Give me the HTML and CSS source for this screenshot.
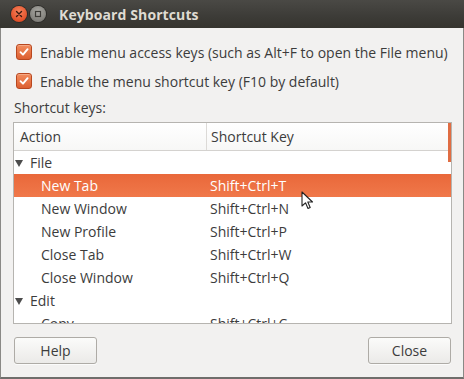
FILE: index.html
```html
<!DOCTYPE html>
<html>
<head>
<meta charset="utf-8">
<link rel="stylesheet" href="styles.css">
</head>
<body>
<div class="window">
  <div class="titlebar">
    <span class="wbtn close-btn"><svg width="8" height="8" viewBox="0 0 8 8"><path d="M1.5 1.5 L6.5 6.5 M6.5 1.5 L1.5 6.5" stroke="#3a1a10" stroke-width="1.4" stroke-linecap="round"/></svg></span>
    <span class="wbtn min-btn"><svg width="8" height="8" viewBox="0 0 8 8"><rect x="1.5" y="1.5" width="5" height="5" fill="none" stroke="#3c3b37" stroke-width="1.2"/></svg></span>
    <span class="title">Keyboard Shortcuts</span>
  </div>
  <div class="content">
    <label class="check-row"><span class="check"><svg width="12" height="12" viewBox="0 0 12 12"><path d="M2.5 6.2 L5 8.7 L9.6 3.2" fill="none" stroke="#fff" stroke-width="1.9" stroke-linecap="round" stroke-linejoin="round"/></svg></span>Enable menu access keys (such as Alt+F to open the File menu)</label>
    <label class="check-row"><span class="check"><svg width="12" height="12" viewBox="0 0 12 12"><path d="M2.5 6.2 L5 8.7 L9.6 3.2" fill="none" stroke="#fff" stroke-width="1.9" stroke-linecap="round" stroke-linejoin="round"/></svg></span>Enable the menu shortcut key (F10 by default)</label>
    <div class="section-label">Shortcut keys:</div>
    <div class="tree">
      <div class="tree-head">
        <div class="col-a">Action</div>
        <div class="col-b">Shortcut Key</div>
      </div>
      <div class="row group"><div class="col-a"><span class="tri"></span>File</div><div class="col-b"></div></div>
      <div class="row selected"><div class="col-a indent">New Tab</div><div class="col-b">Shift+Ctrl+T</div></div>
      <div class="row"><div class="col-a indent">New Window</div><div class="col-b">Shift+Ctrl+N</div></div>
      <div class="row"><div class="col-a indent">New Profile</div><div class="col-b">Shift+Ctrl+P</div></div>
      <div class="row"><div class="col-a indent">Close Tab</div><div class="col-b">Shift+Ctrl+W</div></div>
      <div class="row"><div class="col-a indent">Close Window</div><div class="col-b">Shift+Ctrl+Q</div></div>
      <div class="row group"><div class="col-a"><span class="tri"></span>Edit</div><div class="col-b"></div></div>
      <div class="row"><div class="col-a indent">Copy</div><div class="col-b">Shift+Ctrl+C</div></div>
      <div class="scrollbar"></div>
      <svg class="cursor" width="14" height="20" viewBox="0 0 14 20"><path d="M1 1 L1 15 L4.5 11.8 L7 17.5 L9.2 16.5 L6.8 11 L11.5 11 Z" fill="#fff" stroke="#222" stroke-width="1.1" stroke-linejoin="round"/></svg>
    </div>
    <div class="buttons">
      <button class="btn">Help</button>
      <button class="btn">Close</button>
    </div>
  </div>
</div>
</body>
</html>
```
FILE: styles.css
```css
html, body {
  margin: 0;
  padding: 0;
  background: #f2f1f0;
}
body {
  font-family: "Open Sans", "DejaVu Sans", sans-serif;
  font-size: 14px;
  color: #3c3c3c;
}
.window {
  width: 464px;
  height: 379px;
  box-sizing: border-box;
  background: #f2f1f0;
  border-left: 1px solid #8a8986;
  border-right: 1px solid #8a8986;
  border-bottom: 2px solid #6f6e6b;
  display: flex;
  flex-direction: column;
}
.titlebar {
  height: 28px;
  flex: none;
  margin: 0 -1px;
  background: linear-gradient(#4a4945, #3c3b37 60%, #36352f);
  display: flex;
  align-items: center;
  padding-left: 11px;
}
.wbtn {
  width: 16px;
  height: 16px;
  border-radius: 50%;
  display: flex;
  align-items: center;
  justify-content: center;
  margin-right: 2px;
}
.close-btn {
  background: radial-gradient(circle at 50% 35%, #f7835c, #e2512a 70%, #b83c1c);
  box-shadow: 0 0 0 1px #2c2b28;
}
.min-btn {
  background: radial-gradient(circle at 50% 35%, #aaa9a4, #7e7d78 75%);
  box-shadow: 0 0 0 1px #2c2b28;
  margin-left: 1px;
}
.title {
  color: #dfdbd2;
  font-weight: bold;
  font-size: 14px;
  margin-left: 11px;
  letter-spacing: 0.1px;
}
.content {
  flex: 1;
  display: flex;
  flex-direction: column;
  padding: 13px 11px 0 12px;
}
.check-row {
  display: flex;
  align-items: center;
  height: 22px;
  margin-bottom: 7px;
  white-space: nowrap;
}
.check {
  width: 14px;
  height: 14px;
  flex: none;
  margin: 0 8px 0 3px;
  border: 1px solid #b8471f;
  border-radius: 3px;
  background: linear-gradient(#f38d5e, #dc5f31);
  display: flex;
  align-items: center;
  justify-content: center;
  box-shadow: inset 0 1px 0 rgba(255,255,255,0.25);
}
.section-label {
  height: 20px;
  line-height: 20px;
  margin-top: -1px;
  margin-bottom: 4px;
  padding-left: 1px;
}
.tree {
  position: relative;
  height: 202px;
  box-sizing: border-box;
  border: 1px solid #b6b4b0;
  background: #fff;
  overflow: hidden;
  flex: none;
}
.tree-head {
  display: flex;
  height: 28px;
  box-sizing: border-box;
  border-bottom: 1px solid #d4d2cf;
  background: linear-gradient(#ffffff, #f7f7f6);
  align-items: center;
}
.tree-head .col-a {
  width: 186px;
  padding-left: 6px;
  border-right: 1px solid #dcdad7;
  height: 100%;
  display: flex;
  align-items: center;
}
.tree-head .col-b {
  padding-left: 4px;
}
.row {
  display: flex;
  height: 23px;
  align-items: center;
  white-space: nowrap;
}
.row .col-a {
  width: 194px;
  display: flex;
  align-items: center;
  padding-left: 1px;
}
.row .col-a.indent {
  padding-left: 27px;
  width: 168px;
}
.row .col-b {
  padding-left: 1px;
}
.row.selected {
  background: linear-gradient(#e9683a, #f0784a);
  color: #ffffff;
}
.tri {
  width: 0;
  height: 0;
  border-left: 4px solid transparent;
  border-right: 4px solid transparent;
  border-top: 7px solid #4c4c4c;
  margin: 1px 7px 0 0;
}
.scrollbar {
  position: absolute;
  right: 0;
  top: 0;
  width: 3px;
  height: 39px;
  background: #e06d43;
}
.cursor {
  position: absolute;
  left: 287px;
  top: 68px;
}
.buttons {
  display: flex;
  justify-content: space-between;
  margin-top: 13px;
  padding: 0 1px;
}
.btn {
  font-family: inherit;
  font-size: 14px;
  color: #3c3c3c;
  height: 27px;
  width: 83px;
  border: 1px solid #aeaba6;
  border-radius: 3px;
  background: linear-gradient(#fbfbfa, #ebeae8);
  box-shadow: 0 1px 0 rgba(255,255,255,0.7);
  padding: 0;
}
```
